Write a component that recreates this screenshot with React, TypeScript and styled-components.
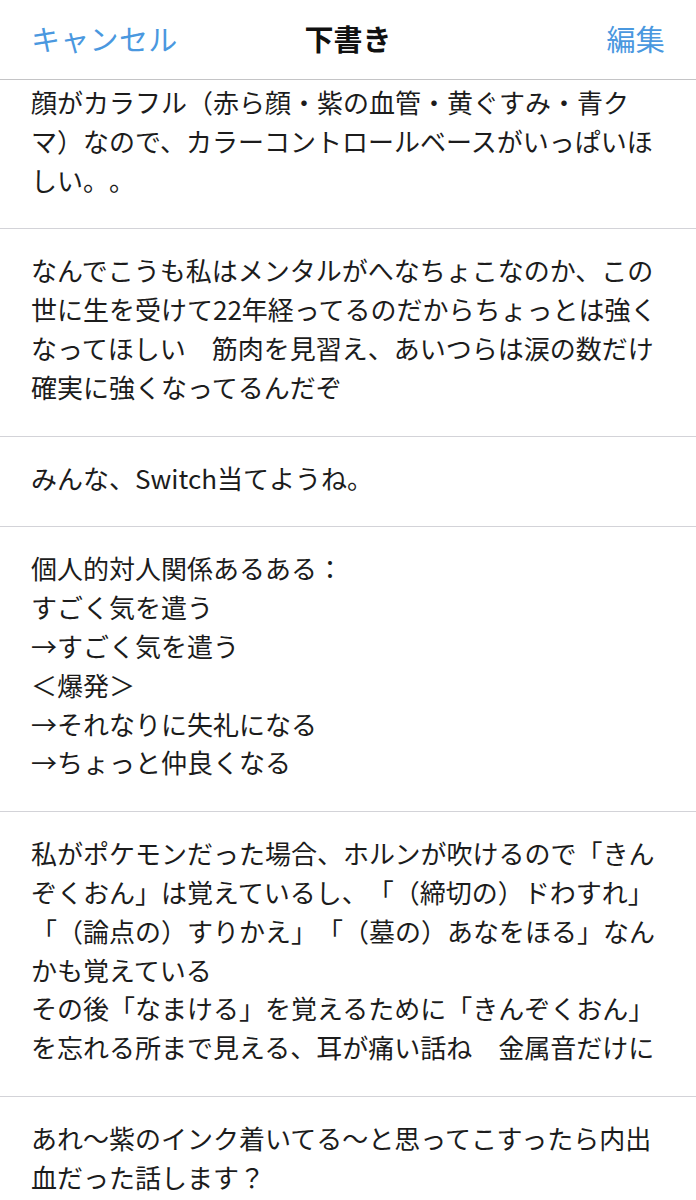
import * as React from 'react';
import styled, { createGlobalStyle } from 'styled-components';

const drafts: string[][] = [
  [
    '顔がカラフル（赤ら顔・紫の血管・黄ぐすみ・青ク',
    'マ）なので、カラーコントロールベースがいっぱいほ',
    'しい。。',
  ],
  [
    'なんでこうも私はメンタルがへなちょこなのか、この',
    '世に生を受けて22年経ってるのだからちょっとは強く',
    'なってほしい　筋肉を見習え、あいつらは涙の数だけ',
    '確実に強くなってるんだぞ',
  ],
  ['みんな、Switch当てようね。'],
  [
    '個人的対人関係あるある：',
    'すごく気を遣う',
    '→すごく気を遣う',
    '＜爆発＞',
    '→それなりに失礼になる',
    '→ちょっと仲良くなる',
  ],
  [
    '私がポケモンだった場合、ホルンが吹けるので「きん',
    'ぞくおん」は覚えているし、「（締切の）ドわすれ」',
    '「（論点の）すりかえ」「（墓の）あなをほる」なん',
    'かも覚えている',
    'その後「なまける」を覚えるために「きんぞくおん」',
    'を忘れる所まで見える、耳が痛い話ね　金属音だけに',
  ],
  ['あれ〜紫のインク着いてる〜と思ってこすったら内出', '血だった話します？'],
];

export default function App() {
  return (
    <>
      <GlobalStyle />
      <Screen>
        <NavBar>
          <NavButton>キャンセル</NavButton>
          <NavTitle>下書き</NavTitle>
          <NavButton $align="right">編集</NavButton>
        </NavBar>
        <Viewport>
          <DraftList $scroll={19}>
            {drafts.map((lines, i) => (
              <DraftRow key={i}>
                {lines.map((line, j) => (
                  <DraftLine key={j}>{line}</DraftLine>
                ))}
              </DraftRow>
            ))}
          </DraftList>
        </Viewport>
      </Screen>
    </>
  );
}

const GlobalStyle = createGlobalStyle`
  html, body {
    margin: 0;
    padding: 0;
    background: #ffffff;
  }
  body {
    font-family: "Noto Sans CJK JP", "Noto Sans", sans-serif;
    color: #111111;
    text-spacing-trim: space-all;
    -webkit-font-smoothing: antialiased;
  }
`;

const Screen = styled.div`
  width: 696px;
  height: 1200px;
  display: flex;
  flex-direction: column;
  overflow: hidden;
  background: #ffffff;
`;

const NavBar = styled.header`
  flex: none;
  height: 80px;
  box-sizing: border-box;
  display: grid;
  grid-template-columns: 1fr auto 1fr;
  align-items: start;
  padding: 19px 31px 0 31px;
  border-bottom: 1px solid #c4c4c6;
  background: #ffffff;
`;

const NavButton = styled.div<{ $align?: 'left' | 'right' }>`
  font-size: 29px;
  line-height: 38px;
  color: #4a98df;
  text-align: ${(p) => p.$align ?? 'left'};
  letter-spacing: 0.3px;
`;

const NavTitle = styled.h1`
  margin: 0;
  font-size: 29px;
  line-height: 38px;
  font-weight: 700;
  color: #111111;
`;

const Viewport = styled.div`
  flex: 1;
  overflow: hidden;
`;

const DraftList = styled.ul<{ $scroll: number }>`
  list-style: none;
  margin: ${(p) => -p.$scroll}px 0 0 0;
  padding: 0;
`;

const DraftRow = styled.li`
  padding: 22px 31px 29px 31px;
  border-bottom: 1px solid #d3d3d8;
`;

const DraftLine = styled.div`
  font-size: 26px;
  line-height: 38.8px;
  white-space: nowrap;
  color: #1c1c1c;
  text-spacing-trim: space-all;
`;
